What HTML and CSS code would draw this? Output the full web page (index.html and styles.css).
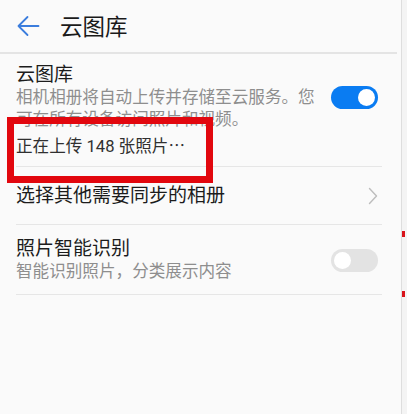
FILE: index.html
```html
<!DOCTYPE html>
<html lang="zh-CN">
<head>
<meta charset="utf-8">
<title>云图库</title>
<link rel="stylesheet" href="styles.css">
</head>
<body>
<div class="screen">
  <main class="page">
    <header class="topbar">
      <svg class="back" width="24" height="24" viewBox="0 0 24 24" aria-hidden="true">
        <path d="M2.5 12 H22.5 M11.5 3 L2.5 12 L11.5 21" fill="none" stroke="#3b7ddd" stroke-width="1.8" stroke-linecap="round" stroke-linejoin="round"/>
      </svg>
      <h1 class="topbar-title">云图库</h1>
    </header>

    <ul class="list">
      <li class="cell cell-cloud">
        <div class="cell-row">
          <div class="cell-text">
            <div class="cell-title">云图库</div>
            <div class="cell-sub">相机相册将自动上传并存储至云服务。您可在所有设备访问照片和视频。</div>
          </div>
          <span class="switch switch-on"><span class="knob"></span></span>
        </div>
        <div class="cell-status">正在上传 148 张照片<span class="ellipsis">…</span></div>
      </li>
      <li class="cell cell-link">
        <div class="cell-title">选择其他需要同步的相册</div>
        <svg class="chevron" width="10" height="18" viewBox="0 0 10 18" aria-hidden="true">
          <polyline points="1.5,1.5 8.5,9 1.5,16.5" fill="none" stroke="#bdbdbd" stroke-width="1.4" stroke-linecap="round" stroke-linejoin="round"/>
        </svg>
      </li>
      <li class="cell cell-ai">
        <div class="cell-text">
          <div class="cell-title">照片智能识别</div>
          <div class="cell-sub">智能识别照片，分类展示内容</div>
        </div>
        <span class="switch switch-off"><span class="knob"></span></span>
      </li>
    </ul>
  </main>
  <aside class="edge">
    <span class="edge-mark edge-mark-1"></span>
    <span class="edge-mark edge-mark-2"></span>
  </aside>
</div>
<div class="highlight"></div>
</body>
</html>
```

FILE: styles.css
```css
html, body {
  margin: 0;
  padding: 0;
}

body {
  background: #fafafa;
  font-family: Roboto, "Noto Sans CJK SC", "Noto Sans", sans-serif;
  color: #1c1c1c;
  width: 407px;
  height: 414px;
  overflow: hidden;
  position: relative;
}

.screen {
  display: flex;
  height: 414px;
}

.page {
  width: 402px;
  border-right: 1px solid #dedede;
  box-sizing: border-box;
}

/* top bar */
.topbar {
  display: flex;
  align-items: center;
  height: 52px;
  margin-right: 4px;
  border-bottom: 2px solid #e4e4e4;
  box-sizing: content-box;
}

.back {
  margin-left: 16px;
  flex: none;
}

.topbar-title {
  margin: 2px 0 0 20px;
  font-size: 22.5px;
  font-weight: 400;
  line-height: 28px;
  color: #1a1a1a;
}

/* settings list */
.list {
  list-style: none;
  margin: 0 0 0 16px;
  padding: 0;
  width: 366px;
}

.cell {
  border-bottom: 1px solid #e6e6e6;
}

.cell-row,
.cell-ai,
.cell-link {
  display: flex;
  align-items: center;
}

.cell-text {
  flex: 1;
  min-width: 0;
  margin-right: 10px;
}

.cell-title {
  font-size: 19px;
  line-height: 24px;
  color: #1c1c1c;
}

.cell-sub {
  font-size: 16.6px;
  line-height: 22px;
  color: #8e8e8e;
}

.cell-cloud {
  padding: 9px 0 8px;
}

.cell-status {
  margin-top: 5px;
  height: 22px;
  font-size: 16.6px;
  line-height: 22px;
  color: #303030;
}

/* CJK ellipsis sits at mid-height */
.ellipsis {
  font-family: "Noto Sans CJK SC", sans-serif;
  line-height: 0;
  letter-spacing: -2px;
}

.cell-link {
  height: 57px;
  justify-content: space-between;
}

.chevron {
  margin-right: 4px;
  flex: none;
}

.cell-ai {
  padding: 12px 0 11px;
}

/* switches */
.switch {
  flex: none;
  position: relative;
  width: 47px;
  height: 23px;
  border-radius: 12px;
  margin-right: 4px;
}

.switch-on {
  background: #0a7cf2;
}

.switch-off {
  background: #e3e3e3;
}

.knob {
  position: absolute;
  top: 3px;
  width: 17px;
  height: 17px;
  border-radius: 50%;
  background: #ffffff;
}

.switch-on .knob {
  right: 3px;
}

.switch-off .knob {
  left: 3px;
}

/* neighbouring pane peeking in at the right edge */
.edge {
  flex: 1;
  background: #f4f4f4;
  position: relative;
}

.edge-mark {
  position: absolute;
  left: 0;
  width: 3px;
  height: 6px;
  background: #d9141b;
}

.edge-mark-1 {
  top: 231px;
}

.edge-mark-2 {
  top: 291px;
}

/* red annotation frame around the upload status */
.highlight {
  position: absolute;
  left: 7px;
  top: 117px;
  width: 206px;
  height: 66px;
  border: 7px solid #e2070e;
  box-sizing: border-box;
}
```
